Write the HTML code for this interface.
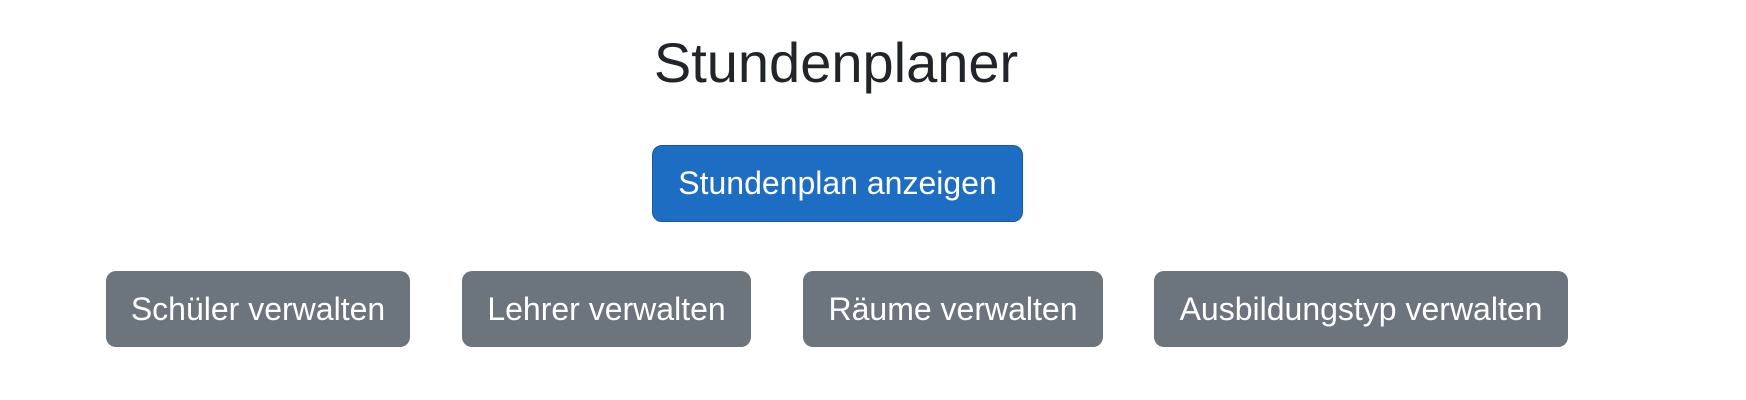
<!DOCTYPE html>
<html><head><meta charset="utf-8"><style>
body{margin:0;width:1746px;height:400px;background:#fff;font-family:"Liberation Sans",Arial,sans-serif;position:relative;overflow:hidden}
h1{position:absolute;left:0;top:30px;width:1672px;margin:0;text-align:center;font-weight:400;font-size:56px;color:#212529;line-height:66px}
.b{position:absolute;display:flex;align-items:center;justify-content:center;color:#fff;font-size:32px;border-radius:10px;box-sizing:border-box}
.p{background:#1d6ec3;border:1px solid #1857a3}
.s{background:#6c757d}
</style></head><body>
<h1>Stundenplaner</h1>
<div class="b p" style="left:652px;top:145px;width:371px;height:77px">Stundenplan anzeigen</div>
<div class="b s" style="left:106px;top:271px;width:304px;height:76px">Schüler verwalten</div>
<div class="b s" style="left:462px;top:271px;width:289px;height:76px">Lehrer verwalten</div>
<div class="b s" style="left:803px;top:271px;width:300px;height:76px">Räume verwalten</div>
<div class="b s" style="left:1154px;top:271px;width:414px;height:76px">Ausbildungstyp verwalten</div>
</body></html>
